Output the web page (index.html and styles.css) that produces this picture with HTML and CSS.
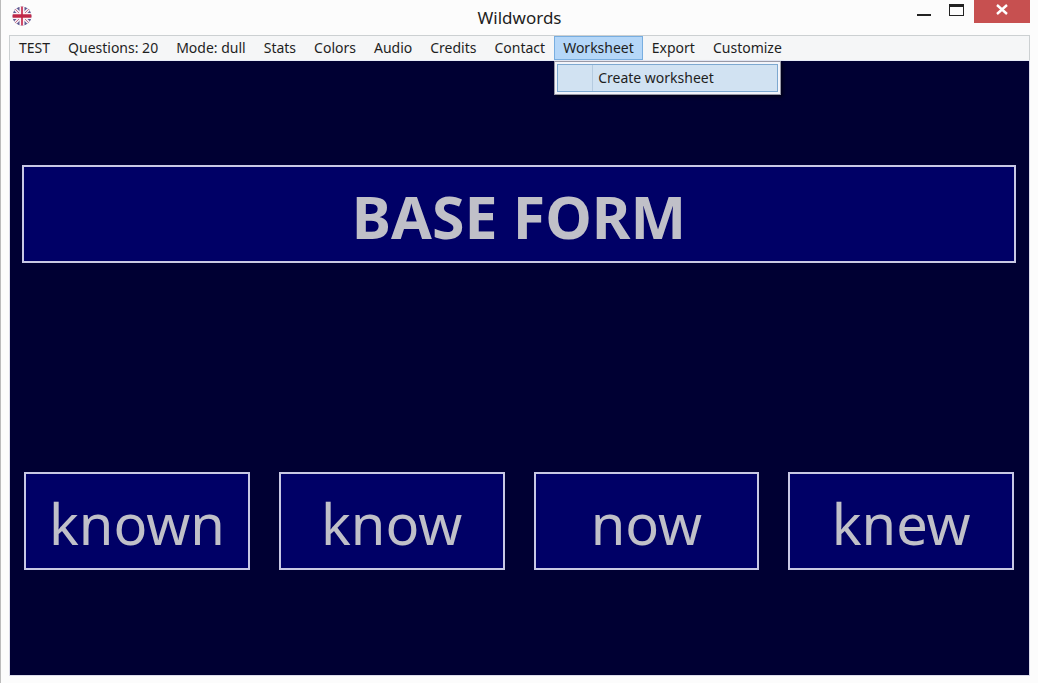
FILE: index.html
```html
<!DOCTYPE html>
<html lang="en">
<head>
    <meta charset="UTF-8">
    <meta name="viewport" content="width=device-width, initial-scale=1.0">
    <title>Wildwords</title>
    <link rel="stylesheet" href="styles.css">
</head>
<body>

    <div class="window">
        <header class="titlebar">
            <svg class="app-icon" viewBox="0 0 20 20" aria-hidden="true">
                <defs>
                    <clipPath id="round"><circle cx="10" cy="10" r="9.5"/></clipPath>
                </defs>
                <g clip-path="url(#round)">
                    <rect width="20" height="20" fill="#5f5a92"/>
                    <path d="M0 0L20 20M20 0L0 20" stroke="#f4eef4" stroke-width="3.4"/>
                    <path d="M0 0L20 20M20 0L0 20" stroke="#c8708c" stroke-width="1"/>
                    <path d="M10 0V20" stroke="#fbf3f6" stroke-width="5"/>
                    <path d="M0 10H20" stroke="#fbf3f6" stroke-width="6"/>
                    <path d="M10 0V20" stroke="#cf4a68" stroke-width="2"/>
                    <path d="M0 10H20" stroke="#c02848" stroke-width="3.6"/>
                </g>
            </svg>
            <h1 class="title">Wildwords</h1>
            <div class="window-buttons">
                <button class="win-btn" aria-label="Minimize">
                    <svg width="14" height="17" viewBox="0 0 14 17"><rect y="14" width="14" height="2" fill="#222"/></svg>
                </button>
                <button class="win-btn" aria-label="Maximize">
                    <svg width="15" height="17" viewBox="0 0 15 17"><path d="M0 4H15V16H0ZM1 7V15H14V7Z" fill="#222" fill-rule="evenodd"/></svg>
                </button>
                <button class="win-btn close-btn" aria-label="Close">
                    <svg width="12" height="17" viewBox="0 0 12 17"><path d="M1 5L11 14M11 5L1 14" stroke="#fff" stroke-width="2.4"/></svg>
                </button>
            </div>
        </header>

        <nav class="menubar">
            <button class="menu-item">TEST</button>
            <button class="menu-item">Questions: 20</button>
            <button class="menu-item">Mode: dull</button>
            <button class="menu-item">Stats</button>
            <button class="menu-item">Colors</button>
            <button class="menu-item">Audio</button>
            <button class="menu-item">Credits</button>
            <button class="menu-item">Contact</button>
            <div class="menu-group">
                <button class="menu-item open" aria-expanded="true">Worksheet</button>
                <div class="dropdown">
                    <button class="dropdown-item">Create worksheet</button>
                </div>
            </div>
            <button class="menu-item">Export</button>
            <button class="menu-item">Customize</button>
        </nav>

        <main class="game">
            <h2 class="box question">BASE FORM</h2>
            <div class="answers">
                <button class="box answer">known</button>
                <button class="box answer">know</button>
                <button class="box answer">now</button>
                <button class="box answer">knew</button>
            </div>
        </main>
    </div>

</body>
</html>
```

FILE: styles.css
```css
* {
    box-sizing: border-box;
}

body {
    margin: 0;
    font-family: "Noto Sans", "Open Sans", sans-serif;
    background: #fcfcfc;
    color: #1e1e1e;
}

button {
    margin: 0;
    padding: 0;
    border: none;
    background: none;
    font-family: inherit;
    color: inherit;
    cursor: pointer;
}

.window {
    display: flex;
    flex-direction: column;
    min-height: 100vh;
    padding: 0 8px 7px;
    border-left: 1px solid #bbb;
}

.titlebar {
    display: grid;
    grid-template-columns: 1fr auto 1fr;
    height: 35px;
}

.app-icon {
    width: 20px;
    height: 20px;
    margin: 6px 3px;
}

.title {
    margin: 0;
    font-size: 17px;
    font-weight: normal;
    line-height: 35px;
}

.window-buttons {
    display: flex;
    justify-content: flex-end;
    align-items: flex-start;
}

.win-btn {
    display: flex;
    justify-content: center;
    width: 32px;
    height: 23px;
}

.close-btn {
    width: 56px;
    margin-left: 2px;
    background: #c75050;
}

.menubar {
    display: flex;
    height: 26px;
    border: 1px solid #ccd0d2;
    border-bottom-color: #e8ecf8;
    background: #f5f6f7;
}

.menu-group {
    position: relative;
}

.menu-item {
    height: 24px;
    padding: 0 8px;
    border: 1px solid transparent;
    font-size: 14px;
    line-height: 22px;
    white-space: nowrap;
}

.menu-item.open {
    border-color: #78aee0;
    background: #b5d7f8;
}

.dropdown {
    position: absolute;
    top: 25px;
    left: 0;
    z-index: 1;
    width: 227px;
    padding: 2px;
    border: 1px solid #9999a6;
    background: #f2f4fa;
    box-shadow: 2px 2px 3px rgba(0, 0, 0, 0.5);
}

.dropdown-item {
    width: 100%;
    height: 28px;
    padding-left: 40px;
    border: 1px solid #7da8d0;
    background: linear-gradient(to right, #d1e2f2 34px, #b5cbe0 34px, #b5cbe0 35px, #d1e2f2 35px);
    font-size: 14px;
    line-height: 26px;
    text-align: left;
}

.game {
    flex: 1;
    padding: 104px 13px 104px 12px;
    border: 1px solid #dcdcea;
    border-top: none;
    background: #000033;
}

.box {
    height: 98px;
    margin: 0;
    padding: 4px 0 0;
    border: 2px solid #c8c8e4;
    background: #000066;
    color: #c0c0c8;
    font-size: 56px;
    line-height: 90px;
    text-align: center;
}

.question {
    font-size: 59px;
    font-weight: bold;
}

.answers {
    display: grid;
    grid-template-columns: repeat(4, 1fr);
    gap: 29px;
    margin-top: 209px;
    padding: 0 2px;
}
```
